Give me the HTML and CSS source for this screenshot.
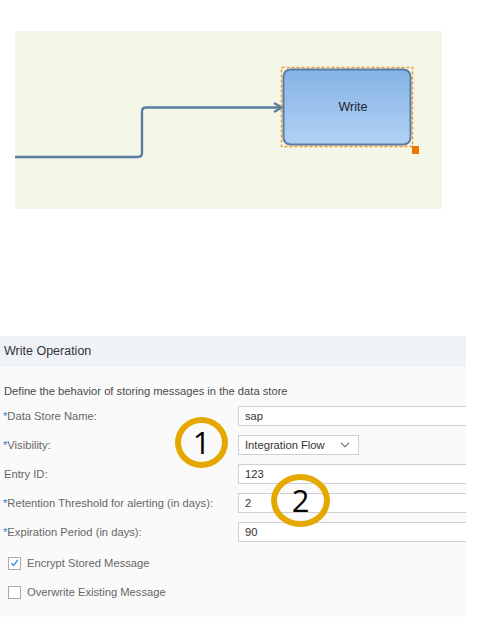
FILE: index.html
```html
<!DOCTYPE html>
<html>
<head>
<meta charset="utf-8">
<link rel="stylesheet" href="styles.css">
</head>
<body>
<div class="canvas">
  <svg class="diagram" width="427" height="178" viewBox="0 0 427 178">
    <defs>
      <linearGradient id="g" x1="0" y1="0" x2="0" y2="1">
        <stop offset="0" stop-color="#85b3e6"/>
        <stop offset="1" stop-color="#b2d1f3"/>
      </linearGradient>
    </defs>
    <path d="M0 126 H123 Q127 126 127 122 V80.5 Q127 76.5 131 76.5 H266" fill="none" stroke="#5a7ba3" stroke-width="2.4"/>
    <path d="M259 72 L267 76.5 L259 81" fill="none" stroke="#5a7ba3" stroke-width="2.2"/>
    <rect x="266.5" y="36.5" width="131" height="79" fill="none" stroke="#f39a2e" stroke-width="1.5" stroke-dasharray="3 2"/>
    <rect x="268.5" y="38.5" width="127" height="75" rx="7" fill="url(#g)" stroke="#5a7ba3" stroke-width="2"/>
    <rect x="397" y="115" width="7" height="8" fill="#f07800"/>
    <text x="338" y="80" text-anchor="middle" class="node-label">Write</text>
  </svg>
</div>

<div class="panel">
  <div class="panel-header">Write Operation</div>
  <div class="panel-body">
    <div class="desc">Define the behavior of storing messages in the data store</div>
    <div class="row">
      <div class="label"><span class="req">*</span>Data Store Name:</div>
      <div class="input wide">sap</div>
    </div>
    <div class="row">
      <div class="label"><span class="req">*</span>Visibility:</div>
      <div class="input select">Integration Flow
        <svg class="chev" width="10" height="6" viewBox="0 0 10 6"><path d="M1 0.8 L5 4.8 L9 0.8" fill="none" stroke="#666" stroke-width="1.1"/></svg>
      </div>
    </div>
    <div class="row">
      <div class="label">Entry ID:</div>
      <div class="input wide">123</div>
    </div>
    <div class="row">
      <div class="label"><span class="req">*</span>Retention Threshold for alerting (in days):</div>
      <div class="input wide">2</div>
    </div>
    <div class="row">
      <div class="label"><span class="req">*</span>Expiration Period (in days):</div>
      <div class="input wide">90</div>
    </div>
    <div class="checks">
      <div class="check-row">
        <span class="box">
          <svg width="12" height="12" viewBox="0 0 12 12"><path d="M2.6 6.2 L5 8.8 L9.6 2.6" fill="none" stroke="#2a7fd4" stroke-width="1.4"/></svg>
        </span>
        <span class="check-label">Encrypt Stored Message</span>
      </div>
      <div class="check-row">
        <span class="box"></span>
        <span class="check-label">Overwrite Existing Message</span>
      </div>
    </div>
  </div>
  <div class="marker m1">1</div>
  <div class="marker m2">2</div>
</div>
</body>
</html>
```
FILE: styles.css
```css
html, body {
  margin: 0;
  padding: 0;
  background: #ffffff;
  width: 500px;
  height: 628px;
  overflow: hidden;
  font-family: "Liberation Sans", Arial, sans-serif;
}
.canvas {
  margin: 31px 0 0 15px;
  width: 427px;
  height: 178px;
  background: #f4f7e7;
}
.diagram {
  display: block;
}
.node-label {
  font-family: "Liberation Sans", Arial, sans-serif;
  font-size: 12.5px;
  fill: #1e2430;
}
.panel {
  position: relative;
  margin-top: 127px;
  width: 466px;
  overflow: hidden;
}
.panel-header {
  height: 31px;
  background: #eff3f8;
  color: #333;
  font-size: 12.5px;
  line-height: 31px;
  padding-left: 4px;
}
.panel-body {
  box-sizing: border-box;
  background: #fafafa;
  height: 250px;
  padding: 17px 0 0 0;
  color: #555;
  font-size: 11.2px;
}
.desc {
  padding-left: 4px;
  height: 14px;
  line-height: 14px;
  color: #4a4a4a;
  margin-bottom: 8px;
}
.row {
  display: flex;
  align-items: center;
  height: 20px;
  margin-bottom: 9px;
}
.label {
  flex: none;
  width: 234px;
  padding-left: 4px;
  color: #666;
  white-space: nowrap;
}
.req {
  color: #2a7fd4;
  margin-left: -1px;
}
.input {
  box-sizing: border-box;
  height: 20px;
  border: 1px solid #cfcfcf;
  background: #fff;
  color: #333;
  line-height: 18px;
  padding-left: 6px;
  flex: none;
}
.input.wide {
  width: 260px;
}
.input.select {
  width: 121px;
  display: flex;
  align-items: center;
  justify-content: space-between;
  padding-right: 8px;
}
.chev {
  display: block;
}
.checks {
  padding: 5px 0 0 8px;
  display: flex;
  flex-direction: column;
  gap: 15px;
}
.check-row {
  display: flex;
  align-items: center;
  height: 14px;
}
.box {
  box-sizing: border-box;
  width: 13px;
  height: 13px;
  border: 1px solid #aaa;
  background: #fff;
  display: flex;
  align-items: center;
  justify-content: center;
}
.box svg {
  display: block;
}
.check-label {
  margin-left: 6px;
  color: #666;
}
.marker {
  position: absolute;
  box-sizing: border-box;
  border: 6px solid #e5a800;
  border-radius: 50%;
  color: #000;
  font-family: "Open Sans", "Noto Sans", sans-serif;
  font-size: 31px;
  display: flex;
  align-items: center;
  justify-content: center;
  line-height: 1;
}
.m1 {
  left: 175px;
  top: 81px;
  width: 53px;
  height: 51px;
}
.m2 {
  left: 271px;
  top: 138px;
  width: 59px;
  height: 53px;
}
```
